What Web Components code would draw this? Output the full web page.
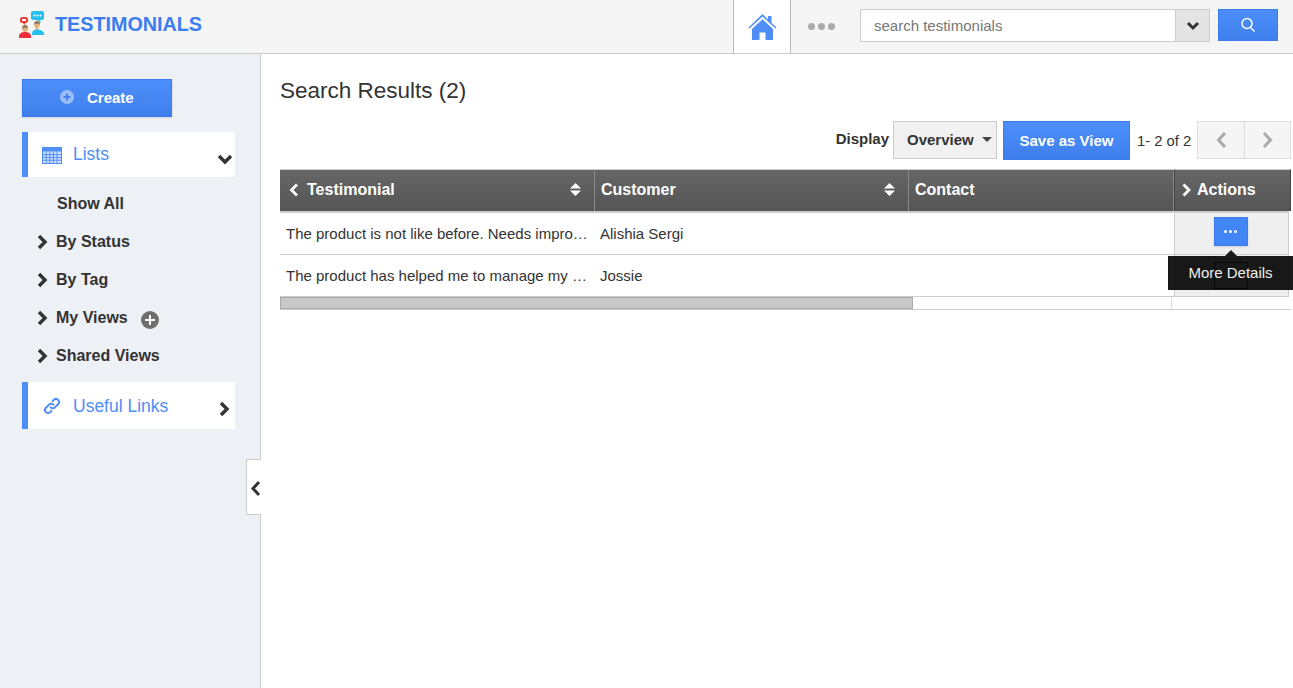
<!DOCTYPE html>
<html lang="en">
<head>
<meta charset="utf-8">
<title>Testimonials</title>
<style>
    html, body { margin: 0; height: 100%; overflow: hidden; }
    body { font-family: "Liberation Sans", Arial, sans-serif; color: #333; background: #fff; }
    .page { display: flex; height: 634px; }
</style>
</head>
<body>
<app-header></app-header>
<div class="page">
    <app-sidebar>
        <side-panel label="Lists" open>
            <svg slot="icon" width="20" height="17" viewBox="0 0 20 17"><rect width="20" height="17" fill="#4f8ef7"/><path d="M1 4.500h18v11.500H1z" fill="#cfe0fd"/><path d="M4.200 4.500v12M7.800 4.500v12M11.400 4.500v12M15 4.500v12M1 7.600h18M1 10.400h18M1 13.200h18" stroke="#4f8ef7" stroke-width="1"/></svg>
        </side-panel>
        <side-link plain>Show All</side-link>
        <side-link>By Status</side-link>
        <side-link>By Tag</side-link>
        <side-link adds>My Views</side-link>
        <side-link>Shared Views</side-link>
        <side-panel label="Useful Links">
            <svg slot="icon" width="18" height="18" viewBox="0 0 18 18" fill="none" stroke="#4f8ef7" stroke-width="2" stroke-linecap="round"><path d="M7.600 10.400a3 3 0 0 0 4.300 0l3.200-3.200a3 3 0 0 0-4.300-4.300L9.600 4.100"/><path d="M10.400 7.600a3 3 0 0 0-4.300 0l-3.200 3.200a3 3 0 0 0 4.300 4.300l1.200-1.200"/></svg>
        </side-panel>
    </app-sidebar>
    <search-results></search-results>
</div>

<script>
// Cabecera superior
class AppHeader extends HTMLElement {
    constructor() {
        super();
        this.attachShadow({ mode: 'open' });
        this.shadowRoot.innerHTML = `
            <style>
                :host { display: flex; align-items: stretch; height: 53px; background: #f5f5f5; border-bottom: 1px solid #ccc; }
                .logo { display: flex; align-items: center; flex: 1; padding: 0 0 4px 19px; }
                .logo span { margin-left: 10px; font-size: 19.750px; font-weight: bold; color: #3b7cf0; }
                .home { width: 56px; background: #fff; border-left: 1px solid #bbb; border-right: 1px solid #bbb; display: flex; align-items: center; justify-content: center; }
                .dots { width: 69px; display: flex; align-items: center; padding-left: 17px; box-sizing: border-box; gap: 3px; }
                .dots i { width: 7px; height: 7px; border-radius: 50%; background: #aaa; }
                .search { display: flex; width: 350px; height: 33px; margin-top: 9px; box-sizing: border-box; border: 1px solid #ccc; background: #fff; }
                .search span { flex: 1; padding-left: 13px; font-size: 15px; line-height: 31px; color: #777; }
                .search b { width: 33px; background: #e4e4e4; border-left: 1px solid #ccc; display: flex; align-items: center; justify-content: center; }
                .go { width: 60px; height: 32px; box-sizing: border-box; margin: 9px 15px 0 8px; background: linear-gradient(#4d8ffa, #3f7fec); border: 1px solid #3b7cf0; display: flex; align-items: center; justify-content: center; }
            </style>
            <div class="logo">
                <svg width="26" height="27" viewBox="0 0 26 27">
                    <path d="M14 0h9a2 2 0 0 1 2 2v5a2 2 0 0 1-2 2h-2l1 3-4-3h-4a2 2 0 0 1-2-2V2a2 2 0 0 1 2-2z" fill="#27c0ee"/>
                    <circle cx="15.500" cy="4.500" r="1" fill="#fff"/><circle cx="18.500" cy="4.500" r="1" fill="#fff"/><circle cx="21.500" cy="4.500" r="1" fill="#fff"/>
                    <rect x="1" y="6" width="8" height="6" rx="2.500" fill="#ee3a3a"/><rect x="3" y="8" width="4" height="2" fill="#fff"/>
                    <path d="M4 12h2.500l-1 2z" fill="#ee3a3a"/>
                    <path d="M3 17a2.800 3.200 0 0 1 6 0l-.500 2.500-1.300 1.500H4.800l-1.300-1.500z" fill="#e8b27e"/><path d="M3 18a3 3.500 0 0 1 6 0l-1-1.500H4z" fill="#666"/>
                    <path d="M0 27v-2c0-2.500 3-4 6-4s6 1.500 6 4v2z" fill="#ee2f3a"/>
                    <path d="M15 13a2.800 3.200 0 0 1 6 0l-.500 2.500-1.300 1.500v2h-2.400v-2l-1.300-1.500z" fill="#e8b27e"/><path d="M15 14a3 3.500 0 0 1 6 0l-1-1.500h-4z" fill="#666"/>
                    <path d="M13 24v-1.500c0-2.500 2.500-4 5-4s7 1.500 7 4V24z" fill="#27c0ee"/>
                </svg>
                <span>TESTIMONIALS</span>
            </div>
            <div class="home">
                <svg width="29" height="28" viewBox="0 0 29 28"><path d="M14.500 1L.500 14.500l1 1L14.500 3.500l13 12 1-1-5-4.800V3h-3.500v3.400z" fill="#4f8ef7"/><path d="M4 16L14.500 6.200 25 16v11h-7.500v-7.500h-6V27H4z" fill="#4f8ef7"/></svg>
            </div>
            <div class="dots"><i></i><i></i><i></i></div>
            <div class="search">
                <span>search testimonials</span>
                <b><svg width="14" height="10" viewBox="0 0 14 10"><path d="M2 2l5 5 5-5" fill="none" stroke="#333" stroke-width="3"/></svg></b>
            </div>
            <div class="go">
                <svg width="16" height="16" viewBox="0 0 16 16" fill="none" stroke="#fff"><circle cx="7" cy="6.500" r="5" stroke-width="1.500"/><path d="M10.500 10.500l4 4" stroke-width="1.500"/></svg>
            </div>
        `;
    }
}

// Columna izquierda
class AppSidebar extends HTMLElement {
    constructor() {
        super();
        this.attachShadow({ mode: 'open' });
        this.shadowRoot.innerHTML = `
            <style>
                :host { display: block; position: relative; box-sizing: border-box; width: 261px; flex: none; height: 100%; padding: 25px 25px 0 22px; background: #edf0f5; border-right: 1px solid #ccc; }
                .create { display: flex; align-items: center; box-sizing: border-box; width: 150px; height: 38px; margin-bottom: 15px; padding: 0 0 2px 37px; gap: 13px; background: linear-gradient(#4d8ffa, #3f7fec); border: 1px solid #3b7cf0; box-shadow: 0 1px 2px rgba(0,0,0,.12); color: #fff; font-size: 15px; font-weight: bold; }
                .handle { position: absolute; left: 246px; top: 405px; box-sizing: border-box; width: 15px; height: 56px; padding-top: 3px; background: #fff; border: 1px solid #ccc; border-right: 0; display: flex; align-items: center; justify-content: flex-end; }
            </style>
            <div class="create">
                <svg width="14" height="14" viewBox="0 0 14 14"><circle cx="7" cy="7" r="7" fill="#9dbdf8"/><path d="M7 3.500v7M3.500 7h7" stroke="#4582ee" stroke-width="2"/></svg>
                <span>Create</span>
            </div>
            <slot></slot>
            <div class="handle">
                <svg width="11" height="17" viewBox="0 0 11 17"><path d="M9 2L3 8.500 9 15" fill="none" stroke="#333" stroke-width="3"/></svg>
            </div>
        `;
    }
}

class SidePanel extends HTMLElement {
    constructor() {
        super();
        this.attachShadow({ mode: 'open' });
        const open = this.hasAttribute('open');
        const chevron = open
            ? '<svg width="16" height="12" viewBox="0 0 16 12" style="margin-top:8px"><path d="M2 3l6 6 6-6" fill="none" stroke="#333" stroke-width="3.400"/></svg>'
            : '<svg width="12" height="16" viewBox="0 0 12 16" style="margin:6px 3px 0 0"><path d="M3 2l6 6-6 6" fill="none" stroke="#333" stroke-width="3.400"/></svg>';
        this.shadowRoot.innerHTML = `
            <style>
                :host { display: flex; align-items: center; box-sizing: border-box; width: 213px; height: ${open ? 45 : 47}px; margin-top: ${open ? 0 : 7}px; padding: 0 2px 0 14px; background: #fff; border-left: 6px solid #4f8ef7; }
                .ico { width: 20px; display: flex; justify-content: center; margin: ${open ? '1px' : '0'} 11px 0 0; }
                span { flex: 1; font-size: 17.500px; color: #4f8ef7; margin-top: ${open ? 0 : 1}px; }
            </style>
            <div class="ico"><slot name="icon"></slot></div>
            <span>${this.getAttribute('label')}</span>
            ${chevron}
        `;
    }
}

class SideLink extends HTMLElement {
    constructor() {
        super();
        this.attachShadow({ mode: 'open' });
        const plain = this.hasAttribute('plain');
        this.shadowRoot.innerHTML = `
            <style>
                :host { display: flex; align-items: center; height: 38px; padding-left: ${plain ? 35 : 15}px; font-size: 16px; font-weight: bold; color: #333; }
                svg.c { margin-right: 8px; }
                svg.p { margin: 3px 0 0 13px; }
                :host(:first-of-type) { margin-top: 8px; }
            </style>
            ${plain ? '' : '<svg class="c" width="11" height="16" viewBox="0 0 11 16"><path d="M2 2l6 6-6 6" fill="none" stroke="#333" stroke-width="3.400"/></svg>'}
            <slot></slot>
            ${this.hasAttribute('adds') ? '<svg class="p" width="18" height="18" viewBox="0 0 18 18"><circle cx="9" cy="9" r="9" fill="#6f6f6f"/><path d="M9 4v10M4 9h10" stroke="#fff" stroke-width="2"/></svg>' : ''}
        `;
    }
}

// Zona principal con resultados
class SearchResults extends HTMLElement {
    constructor() {
        super();
        this.attachShadow({ mode: 'open' });
        this.shadowRoot.innerHTML = `
            <style>
                :host { display: block; flex: 1; min-width: 0; padding: 23px 0 0 19px; }
                h1 { margin: 0; font-size: 22.500px; font-weight: normal; line-height: 27px; color: #333; }
                .tools { display: flex; align-items: flex-start; margin: 17px 2px 9px 0; justify-content: flex-end; font-size: 15px; height: 39px; }
                .lbl { font-weight: bold; line-height: 36px; margin-right: 4px; color: #333; }
                .sel { display: flex; align-items: center; box-sizing: border-box; width: 104px; height: 38px; padding: 0 0 2px 13px; background: #f1f1f1; border: 1px solid #ccc; font-size: 15px; font-weight: bold; color: #333; }
                .sel i { width: 0; height: 0; margin-left: 8px; border: 5px solid transparent; border-top-color: #444; border-bottom: 0; }
                .save { box-sizing: border-box; width: 127px; height: 39px; margin-left: 6px; background: linear-gradient(#4d8ffa, #3f7fec); border: 1px solid #3b7cf0; color: #fff; font-size: 15px; font-weight: bold; line-height: 37px; text-align: center; }
                .count { box-sizing: border-box; width: 67px; padding-left: 7px; line-height: 41px; font-size: 14.800px; white-space: nowrap; }
                .pager { display: flex; height: 38px; box-sizing: border-box; border: 1px solid #ddd; background: #f5f5f5; }
                .pager div { width: 46px; display: flex; align-items: center; justify-content: center; }
                .pager div + div { width: 45px; border-left: 1px solid #ddd; }
            </style>
            <h1>Search Results (2)</h1>
            <div class="tools">
                <span class="lbl">Display</span>
                <div class="sel">Overview<i></i></div>
                <div class="save">Save as View</div>
                <span class="count">1- 2 of 2</span>
                <div class="pager">
                    <div><svg width="13" height="18" viewBox="0 0 13 18"><path d="M10 2L3.500 9l6.500 7" fill="none" stroke="#aaa" stroke-width="3"/></svg></div>
                    <div><svg width="13" height="18" viewBox="0 0 13 18"><path d="M3 2l6.500 7L3 16" fill="none" stroke="#aaa" stroke-width="3"/></svg></div>
                </div>
            </div>
            <result-grid></result-grid>
        `;
    }
}

class ResultGrid extends HTMLElement {
    constructor() {
        super();
        this.attachShadow({ mode: 'open' });
        const sort = '<svg width="11" height="15" viewBox="0 0 11 15"><path d="M5.500 1L11 6.500H0zM5.500 14L0 8.500h11z" fill="#fff"/></svg>';
        const rows = [
            ['The product is not like before. Needs improvement in the service', 'Alishia Sergi'],
            ['The product has helped me to manage my business in a better way', 'Jossie']
        ];
        this.shadowRoot.innerHTML = `
            <style>
                :host { display: block; position: relative; width: 1011px; border-bottom: 1px solid #ccc; font-size: 15px; color: #333; }
                .wrap { display: flex; }
                .left { width: 894px; }
                .head { display: flex; height: 42px; box-sizing: border-box; background: linear-gradient(#666, #555); border-top: 1px solid #ccc; color: #fff; font-size: 16px; font-weight: bold; }
                .th { display: flex; align-items: center; box-sizing: border-box; padding: 0 13px 2px 6px; border-right: 1px solid #888; }
                .th span { flex: 1; }
                .c1 { width: 315px; } .c2 { width: 314px; } .c3 { width: 265px; }
                .th.c1 { padding-left: 8px; } .th.c1 svg:first-child { margin-right: 7px; }
                .row { display: flex; height: 42px; box-sizing: border-box; border-bottom: 1px solid #ccc; align-items: center; }
                .first { border-top: 2px solid #ccc; height: 44px; }
                .td { box-sizing: border-box; padding: 0 6px; white-space: nowrap; overflow: hidden; text-overflow: ellipsis; }
                .td.c2 { padding-left: 5px; }
                .bar { height: 12px; width: 892px; box-sizing: border-box; border: 1px solid #ddd; border-width: 0 1px; }
                .thumb { width: 633px; height: 12px; margin-left: -1px; box-sizing: border-box; background: #c8c8c8; border: 1px solid #aaa; }
                .right { width: 117px; }
                .right .th { height: 42px; background: linear-gradient(#666, #555); border-top: 1px solid #ccc; border-left: 1px solid #444; border-right: 1px solid #444; color: #fff; font-size: 16px; font-weight: bold; padding-left: 6px; gap: 5px; }
                .cell { box-sizing: border-box; width: 115px; height: 42px; padding-right: 2px; background: #efefef; border: 1px solid #ccc; border-top: 0; display: flex; align-items: center; justify-content: center; }
                .cell.top { border-top: 2px solid #ccc; height: 44px; padding-bottom: 5px; }
                .more { box-sizing: border-box; width: 34px; height: 29px; background: #4285f4; border: 1px solid #3b7cf0; display: flex; align-items: center; justify-content: center; gap: 2px; box-shadow: 0 1px 2px rgba(0,0,0,.12); }
                .more i { width: 3px; height: 3px; background: #fff; border-radius: 50%; }
                .low .more { height: 27px; background: #efefef; border-color: #555; box-shadow: none; }
                .low .more i { background: #efefef; }
                .tip { position: absolute; left: 888px; top: 87px; box-sizing: border-box; width: 125px; height: 34px; background: rgba(0,0,0,.9); color: #f0f0f0; font-size: 15px; line-height: 34px; text-align: center; }
                .tip::before { content: ""; position: absolute; left: 57px; top: -6px; border: 6px solid transparent; border-top: 0; border-bottom-color: #1a1a1a; }
            </style>
            <div class="wrap">
                <div class="left">
                    <div class="head">
                        <div class="th c1"><svg width="12" height="14" viewBox="0 0 12 14"><path d="M9 1.500L3.500 7 9 12.500" fill="none" stroke="#fff" stroke-width="2.800"/></svg><span>Testimonial</span>${sort}</div>
                        <div class="th c2"><span>Customer</span>${sort}</div>
                        <div class="th c3"><span>Contact</span></div>
                    </div>
                    ${rows.map((r, i) => `
                        <div class="row${i === 0 ? ' first' : ''}">
                            <div class="td c1">${r[0]}</div>
                            <div class="td c2">${r[1]}</div>
                            <div class="td c3"></div>
                        </div>`).join('')}
                    <div class="bar"><div class="thumb"></div></div>
                </div>
                <div class="right">
                    <div class="th"><svg width="11" height="14" viewBox="0 0 11 14"><path d="M2.500 1.500L8 7l-5.500 5.500" fill="none" stroke="#fff" stroke-width="2.800"/></svg><span>Actions</span></div>
                    <div class="cell top"><div class="more"><i></i><i></i><i></i></div></div>
                    <div class="cell low"><div class="more"><i></i><i></i><i></i></div></div>
                </div>
            </div>
            <div class="tip">More Details</div>
        `;
    }
}

customElements.define('app-header', AppHeader);
customElements.define('app-sidebar', AppSidebar);
customElements.define('side-panel', SidePanel);
customElements.define('side-link', SideLink);
customElements.define('search-results', SearchResults);
customElements.define('result-grid', ResultGrid);
</script>
</body>
</html>
